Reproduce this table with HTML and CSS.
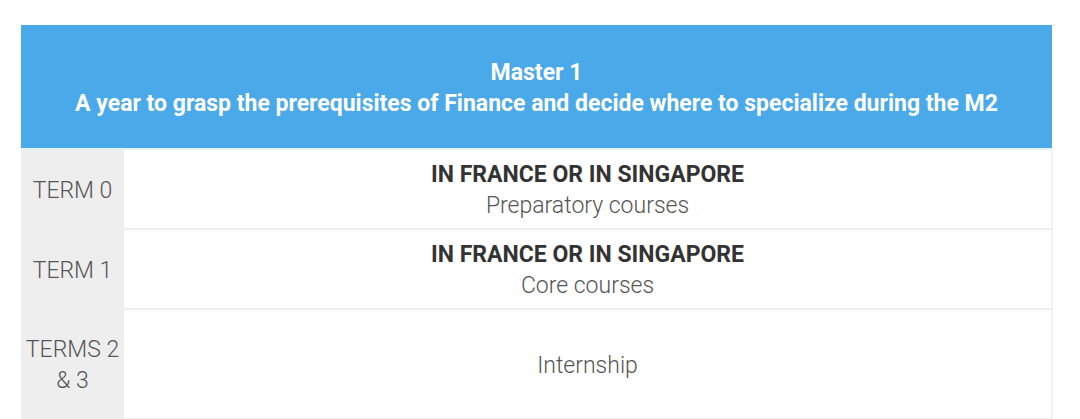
FILE: index.html
```html
<!DOCTYPE html>
<html>
<head>
<meta charset="utf-8">
<link rel="stylesheet" href="styles.css">
</head>
<body>
<div class="wrap">
  <table class="prog">
    <colgroup>
      <col class="col-term">
      <col class="col-desc">
    </colgroup>
    <thead>
      <tr>
        <th colspan="2" class="head">Master 1<br>A year to grasp the prerequisites of Finance and decide where to specialize during the M2</th>
      </tr>
    </thead>
    <tbody>
      <tr>
        <td class="term">TERM 0</td>
        <td class="desc"><strong>IN FRANCE OR IN SINGAPORE</strong><br>Preparatory courses</td>
      </tr>
      <tr>
        <td class="term">TERM 1</td>
        <td class="desc"><strong>IN FRANCE OR IN SINGAPORE</strong><br>Core courses</td>
      </tr>
      <tr class="tall">
        <td class="term">TERMS 2<br>&amp; 3</td>
        <td class="desc">Internship</td>
      </tr>
    </tbody>
  </table>
</div>
</body>
</html>
```

FILE: styles.css
```css
html, body {
  margin: 0;
  padding: 0;
  background: #ffffff;
}
body {
  font-family: Roboto, "Liberation Sans", Arial, sans-serif;
}
.wrap {
  padding: 25px 27px 0 21px;
}
.prog {
  width: 1032px;
  border-collapse: collapse;
  table-layout: fixed;
}
.col-term {
  width: 103px;
}
.head {
  background: #4aa9e9;
  color: #ffffff;
  font-weight: 700;
  font-size: 23px;
  line-height: 31px;
  height: 121px;
  padding: 2px 0 0;
  text-align: center;
  vertical-align: middle;
  border-bottom: 2px solid #e4f3fb;
}
.prog tbody tr {
  height: 80px;
}
.prog tbody tr.tall {
  height: 110px;
}
.term {
  background: #eeeeee;
  color: #555555;
  font-weight: 300;
  font-size: 23px;
  line-height: 31px;
  text-align: center;
  vertical-align: middle;
  padding: 2px 0 0;
}
.desc {
  color: #555555;
  font-weight: 300;
  font-size: 23px;
  line-height: 31px;
  text-align: center;
  vertical-align: middle;
  padding: 2px 0 0;
  border-bottom: 2px solid #eeeeee;
  border-right: 2px solid #f2f2f2;
}
.desc strong {
  font-weight: 700;
  color: #333333;
}
```
